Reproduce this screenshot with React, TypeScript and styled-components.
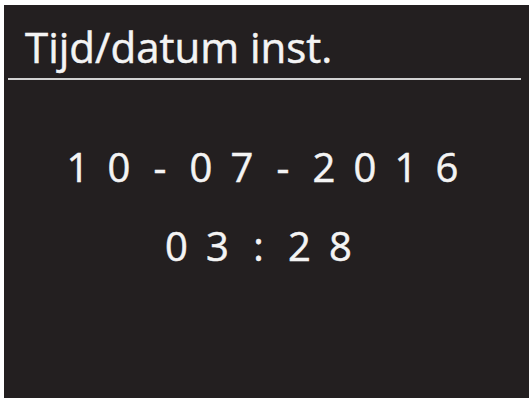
import React from "react";
import styled, { createGlobalStyle } from "styled-components";

const Global = createGlobalStyle`
  html, body { margin: 0; padding: 0; background: #ffffff; }
  body { width: 529px; height: 401px; overflow: hidden; }
`;

const Screen = styled.div`
  box-sizing: border-box;
  margin: 5px 0 0 4px;
  width: 525px;
  height: 393px;
  background: #231f20;
  color: #f4f4f4;
  font-family: "Open Sans", "Lato", sans-serif;
  -webkit-text-stroke: 0.5px #f4f4f4;
  display: flex;
  flex-direction: column;
`;

const Header = styled.div`
  margin: 0 8px 0 4px;
  padding: 15.7px 0 5.3px 17px;
  border-bottom: 2px solid #d2d2d2;
  font-size: 42px;
  line-height: 52px;
  white-space: nowrap;
`;

const Body = styled.div`
  display: flex;
  flex-direction: column;
  align-items: center;
  gap: 31px;
  margin-top: 63.5px;
`;

const Row = styled.div<{ $shift: number }>`
  display: flex;
  font-size: 40px;
  line-height: 48px;
  transform: translateX(${(p) => p.$shift}px);
`;

const Cell = styled.span`
  width: 41px;
  text-align: center;
`;

const date = "10-07-2016".split("");
const time = "03:28".split("");

export default function App() {
  return (
    <>
      <Global />
      <Screen>
        <Header>Tijd/datum inst.</Header>
        <Body>
          <Row $shift={-4}>
            {date.map((c, i) => (
              <Cell key={i}>{c}</Cell>
            ))}
          </Row>
          <Row $shift={-8}>
            {time.map((c, i) => (
              <Cell key={i}>{c}</Cell>
            ))}
          </Row>
        </Body>
      </Screen>
    </>
  );
}
